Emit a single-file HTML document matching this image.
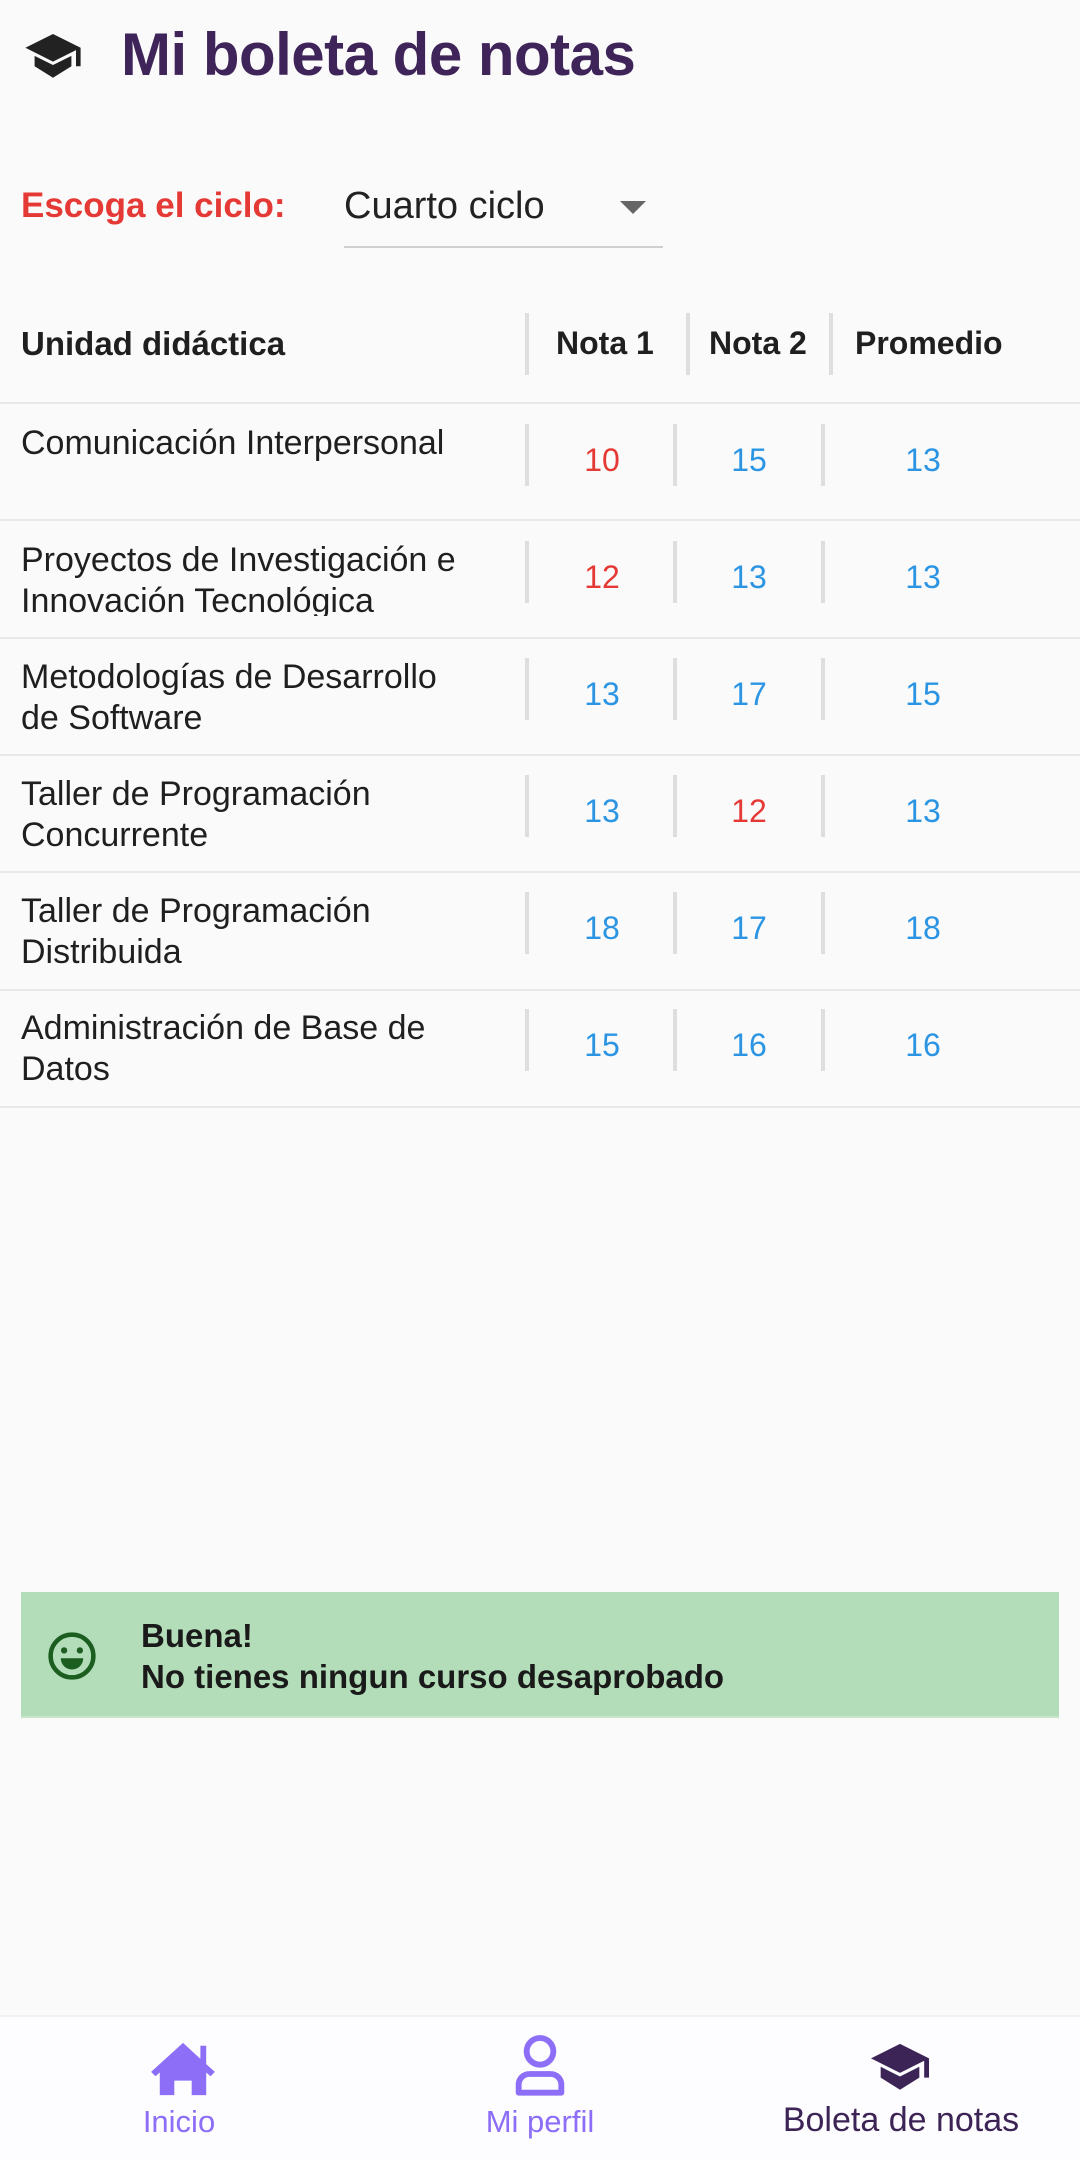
<!DOCTYPE html>
<html><head><meta charset="utf-8"><style>
*{margin:0;padding:0;box-sizing:border-box}
body{width:1080px;height:2160px;background:#fafafa;font-family:"Liberation Sans",sans-serif;position:relative;overflow:hidden;color:#1f1f1f}
.a{position:absolute;white-space:nowrap}
.t{font-size:34px;line-height:41px;left:21px}
.n{font-size:32px;width:120px;text-align:center}
.r{color:#e53935}.b{color:#2b95e3}
.line{position:absolute;left:0;width:1080px;height:2px;background:#e8e8e8}
.dv{position:absolute;width:4px;background:#dedede}
</style></head><body>
<svg class="a" style="left:25px;top:34px" width="56" height="46" viewBox="0 0 24 20"><path d="M12 0L0 6l12 6 10-5v7h2V6z" fill="#222"/><path d="M4 9.5v4.5l8 5 8-5V9.5l-8 4z" fill="#222"/></svg>
<div class="a" style="left:121px;top:20px;font-size:60px;font-weight:bold;color:#3f2459;letter-spacing:-0.5px">Mi boleta de notas</div>

<div class="a" style="left:21px;top:186px;font-size:35px;font-weight:bold;color:#e53935">Escoga el ciclo:</div>
<div class="a" style="left:344px;top:185px;font-size:38px;color:#222">Cuarto ciclo</div>
<div class="a" style="left:620px;top:201px;width:0;height:0;border-left:13px solid transparent;border-right:13px solid transparent;border-top:13px solid #666"></div>
<div class="a" style="left:344px;top:246px;width:319px;height:2px;background:#cfcfcf"></div>

<div class="a" style="left:21px;top:325px;font-size:33px;font-weight:bold">Unidad didáctica</div>
<div class="a" style="left:556px;top:325px;font-size:32px;font-weight:bold">Nota 1</div>
<div class="a" style="left:709px;top:325px;font-size:32px;font-weight:bold">Nota 2</div>
<div class="a" style="left:855px;top:325px;font-size:32px;font-weight:bold">Promedio</div>
<div class="dv" style="left:525px;top:313px;height:62px"></div>
<div class="dv" style="left:686px;top:313px;height:62px"></div>
<div class="dv" style="left:829px;top:313px;height:62px"></div>
<div class="line" style="top:402px"></div>

<div class="a t" style="top:423px">Comunicación Interpersonal</div>
<div class="a t" style="top:540px;height:76px;overflow:hidden">Proyectos de Investigación e<br>Innovación Tecnológica</div>
<div class="a t" style="top:657px">Metodologías de Desarrollo<br>de Software</div>
<div class="a t" style="top:774px">Taller de Programación<br>Concurrente</div>
<div class="a t" style="top:891px">Taller de Programación<br>Distribuida</div>
<div class="a t" style="top:1008px">Administración de Base de<br>Datos</div>

<div class="a n r" style="left:542px;top:442px">10</div><div class="a n b" style="left:689px;top:442px">15</div><div class="a n b" style="left:863px;top:442px">13</div>
<div class="a n r" style="left:542px;top:559px">12</div><div class="a n b" style="left:689px;top:559px">13</div><div class="a n b" style="left:863px;top:559px">13</div>
<div class="a n b" style="left:542px;top:676px">13</div><div class="a n b" style="left:689px;top:676px">17</div><div class="a n b" style="left:863px;top:676px">15</div>
<div class="a n b" style="left:542px;top:793px">13</div><div class="a n r" style="left:689px;top:793px">12</div><div class="a n b" style="left:863px;top:793px">13</div>
<div class="a n b" style="left:542px;top:910px">18</div><div class="a n b" style="left:689px;top:910px">17</div><div class="a n b" style="left:863px;top:910px">18</div>
<div class="a n b" style="left:542px;top:1027px">15</div><div class="a n b" style="left:689px;top:1027px">16</div><div class="a n b" style="left:863px;top:1027px">16</div>

<div class="dv" style="left:525px;top:424px;height:62px"></div><div class="dv" style="left:673px;top:424px;height:62px"></div><div class="dv" style="left:821px;top:424px;height:62px"></div>
<div class="dv" style="left:525px;top:541px;height:62px"></div><div class="dv" style="left:673px;top:541px;height:62px"></div><div class="dv" style="left:821px;top:541px;height:62px"></div>
<div class="dv" style="left:525px;top:658px;height:62px"></div><div class="dv" style="left:673px;top:658px;height:62px"></div><div class="dv" style="left:821px;top:658px;height:62px"></div>
<div class="dv" style="left:525px;top:775px;height:62px"></div><div class="dv" style="left:673px;top:775px;height:62px"></div><div class="dv" style="left:821px;top:775px;height:62px"></div>
<div class="dv" style="left:525px;top:892px;height:62px"></div><div class="dv" style="left:673px;top:892px;height:62px"></div><div class="dv" style="left:821px;top:892px;height:62px"></div>
<div class="dv" style="left:525px;top:1009px;height:62px"></div><div class="dv" style="left:673px;top:1009px;height:62px"></div><div class="dv" style="left:821px;top:1009px;height:62px"></div>

<div class="line" style="top:519px"></div><div class="line" style="top:637px"></div><div class="line" style="top:754px"></div><div class="line" style="top:871px"></div><div class="line" style="top:989px"></div><div class="line" style="top:1106px"></div>

<div class="a" style="left:21px;top:1592px;width:1038px;height:126px;background:#b3ddb8;border-bottom:2px solid #c9e6cc"></div>
<svg class="a" style="left:45px;top:1629px" width="54" height="54" viewBox="0 0 24 24"><circle cx="12" cy="12" r="9.5" fill="none" stroke="#1b5e20" stroke-width="2"/><circle cx="8.5" cy="9.5" r="1.4" fill="#1b5e20"/><circle cx="15.5" cy="9.5" r="1.4" fill="#1b5e20"/><path d="M7 13h10a5 5 0 0 1-10 0z" fill="#1b5e20"/></svg>
<div class="a" style="left:141px;top:1615px;font-size:33px;line-height:41px;font-weight:bold;color:#1a1a1a">Buena!<br>No tienes ningun curso desaprobado</div>

<div class="a" style="left:0;top:2015px;width:1080px;height:145px;background:#fdfcfe;border-top:2px solid #f2f2f2"></div>
<svg class="a" style="left:148px;top:2040px" width="70" height="58" viewBox="0 0 24 20"><path d="M12 1L1 11l1.5 1.5L4 11.2V19h5v-5h6v5h5v-7.8l1.5 1.3L23 11l-3-2.7V2h-2v4.5z" fill="#8c6ef7"/></svg>
<svg class="a" style="left:512px;top:2034px" width="56" height="64" viewBox="0 0 20 24"><circle cx="10" cy="6.5" r="5" fill="none" stroke="#8c6ef7" stroke-width="2.2"/><path d="M2 22v-3a4 4 0 0 1 4-4h8a4 4 0 0 1 4 4v3z" fill="none" stroke="#8c6ef7" stroke-width="2.2" stroke-linejoin="round"/></svg>
<svg class="a" style="left:871px;top:2043px" width="58" height="50" viewBox="0 0 24 20"><path d="M12 0L0 6l12 6 10-5v7h2V6z" fill="#3d2456"/><path d="M4 9.5v4.5l8 5 8-5V9.5l-8 4z" fill="#3d2456"/></svg>
<div class="a" style="left:79px;top:2104px;width:200px;text-align:center;font-size:31px;color:#8c6ef7">Inicio</div>
<div class="a" style="left:440px;top:2104px;width:200px;text-align:center;font-size:31px;color:#8c6ef7">Mi perfil</div>
<div class="a" style="left:751px;top:2101px;width:300px;text-align:center;font-size:34px;color:#3d2456">Boleta de notas</div>
</body></html>
